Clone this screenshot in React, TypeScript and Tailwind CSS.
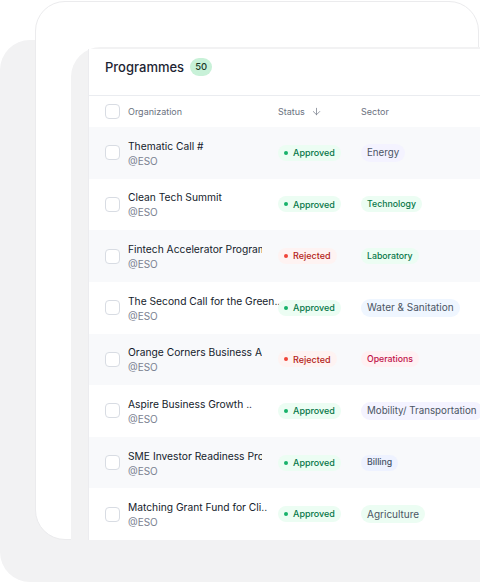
import { ArrowDown } from 'lucide-react'

type Row = {
  title: string
  clip?: boolean
  status: 'Approved' | 'Rejected'
  sector: string
  tone: 'purple' | 'greenText' | 'blue' | 'rose' | 'indigo' | 'greenGray'
}

const rows: Row[] = [
  { title: 'Thematic Call #',                 status: 'Approved', sector: 'Energy',                  tone: 'purple' },
  { title: 'Clean Tech Summit',               status: 'Approved', sector: 'Technology',              tone: 'greenText' },
  { title: 'Fintech Accelerator Programme', clip: true, status: 'Rejected', sector: 'Laboratory',   tone: 'greenText' },
  { title: 'The Second Call for the Green..', status: 'Approved', sector: 'Water & Sanitation',      tone: 'blue' },
  { title: 'Orange Corners Business Accelerator', clip: true, status: 'Rejected', sector: 'Operations', tone: 'rose' },
  { title: 'Aspire Business Growth ..',       status: 'Approved', sector: 'Mobility/ Transportation', tone: 'purple' },
  { title: 'SME Investor Readiness Programme', clip: true, status: 'Approved', sector: 'Billing',   tone: 'indigo' },
  { title: 'Matching Grant Fund for Cli..',   status: 'Approved', sector: 'Agriculture',             tone: 'greenGray' },
]

// sector pills: the "large" ones use grey 10px text, the small ones coloured 8.75px
const toneClass: Record<Row['tone'], string> = {
  purple:    'h-[18px] px-[6px] text-[9.75px] bg-[#f4f3ff] text-[#4b5563]',
  blue:      'h-[18px] px-[6px] text-[10px] bg-[#eff6ff] text-[#4b5563]',
  greenGray: 'h-[18px] px-[6px] text-[10px] bg-[#ecfdf3] text-[#4b5563]',
  greenText: 'h-[16px] px-[6px] text-[8.75px] font-medium bg-[#ecfdf3] text-[#067647]',
  rose:      'h-[16px] px-[6px] text-[8.75px] font-medium bg-[#fff1f3] text-[#c01048]',
  indigo:    'h-[16px] px-[6px] text-[8.75px] font-medium bg-[#eef2ff] text-[#475467]',
}

function Checkbox() {
  return <div className="w-[15px] h-[15px] shrink-0 rounded-[4px] border border-[#d8dce3] bg-white" />
}

function StatusBadge({ status }: { status: Row['status'] }) {
  const ok = status === 'Approved'
  return (
    <span
      className={`inline-flex items-center gap-[5px] h-[16px] pl-[6px] pr-[6px] rounded-full text-[9px] font-medium ${
        ok ? 'bg-[#ecfdf3] text-[#067647]' : 'bg-[#fef3f2] text-[#b42318]'
      }`}
    >
      <span className={`w-[4px] h-[4px] rounded-full ${ok ? 'bg-[#17b26a]' : 'bg-[#f04438]'}`} />
      {status}
    </span>
  )
}

export default function App() {
  return (
    <div
      className="relative w-[480px] h-[582px] overflow-hidden bg-white"
      style={{ fontFamily: 'Inter, "Noto Sans", sans-serif' }}
    >
      {/* stacked card backdrops */}
      <div className="absolute left-0 top-[40px] w-[480px] h-[542px] rounded-[30px] bg-[#f2f2f3]" />
      <div className="absolute left-[35px] top-[1px] w-[444px] h-[539px] rounded-[30px] border border-[#ebebed] bg-white" />
      <div className="absolute left-[71px] top-[47px] w-[420px] h-[560px] rounded-tl-[30px] bg-[#f2f2f3]" />

      {/* table panel */}
      <div className="absolute left-[89px] top-[49px] w-[391px] h-[491px] overflow-hidden bg-white shadow-[-1px_0_0_#ececef]">
        <div className="flex items-start gap-[6px] h-[47px] pl-4 pt-[9px] border-b border-[#eaecf0]">
          <span className="text-[13px] leading-[18px] font-medium text-[#1d2433]">Programmes</span>
          <span className="inline-flex items-center justify-center h-[18px] px-[5px] rounded-full bg-[#c8f1d8] text-[9.5px] font-medium text-[#1b3a29]">
            50
          </span>
        </div>

        <div className="flex items-center h-[31px] pl-4 text-[9px] text-[#6b7280]">
          <Checkbox />
          <div className="w-[150px] shrink-0 ml-2">Organization</div>
          <div className="w-[83px] shrink-0 flex items-center gap-[6px]">
            Status
            <ArrowDown size={11} strokeWidth={1.5} />
          </div>
          <div>Sector</div>
        </div>

        {rows.map((r, i) => (
          <div
            key={r.title}
            className={`flex items-center h-[51.625px] pl-4 ${i % 2 === 0 ? 'bg-[#f8f9fb]' : 'bg-white'}`}
          >
            <Checkbox />
            <div className="w-[150px] shrink-0 ml-2 pt-[2px] flex flex-col gap-[2px]">
              <span
                className={`block text-[10.25px] leading-[13px] text-[#141b2b] whitespace-nowrap ${
                  r.clip ? 'w-[134px] overflow-hidden' : ''
                }`}
              >
                {r.title}
              </span>
              <div className="text-[10px] leading-[13px] text-[#7a8190]">@ESO</div>
            </div>
            <div className="w-[83px] shrink-0 flex items-center">
              <StatusBadge status={r.status} />
            </div>
            <span className={`inline-flex shrink-0 items-center rounded-full whitespace-nowrap ${toneClass[r.tone]}`}>
              {r.sector}
            </span>
          </div>
        ))}
      </div>
    </div>
  )
}
